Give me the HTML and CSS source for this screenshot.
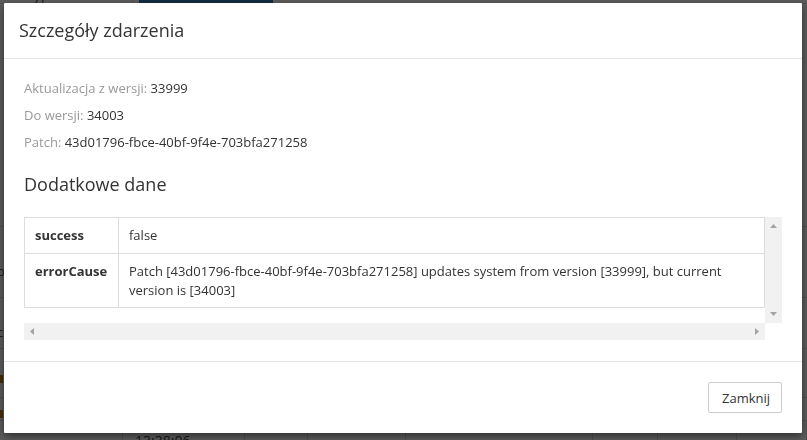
FILE: index.html
```html
<!DOCTYPE html>
<html lang="pl">
<head>
<meta charset="utf-8">
<title>Szczegóły zdarzenia</title>
<link rel="stylesheet" href="styles.css">
</head>
<body>
<div class="page">
  <div class="top-row">
    <span class="top-label">Typ zdarzenia</span>
    <span class="badge">UPDATE ERROR <span class="badge-dot"></span></span>
  </div>
  <div class="bg-table">
    <div class="bg-row r1"></div>
    <div class="bg-row r2"><span class="bg-mark">o</span></div>
    <div class="bg-row r3"><span class="bg-mark">c</span></div>
    <div class="bg-row r4"><span class="bg-orange"></span></div>
    <div class="bg-row r5"><span class="bg-orange"></span></div>
    <div class="bg-row r6">
      <div class="c c1"></div><div class="c c2">13:38:06</div><div class="c c3"></div><div class="c c4"></div><div class="c c5"></div><div class="c c6"></div><div class="c c7"></div><div class="c c8"></div>
    </div>
  </div>
</div>
<div class="backdrop"></div>
<div class="modal">
  <div class="modal-header">
    <h4 class="modal-title">Szczegóły zdarzenia</h4>
  </div>
  <div class="modal-body">
    <p class="info"><span class="label">Aktualizacja z wersji:</span> 33999</p>
    <p class="info"><span class="label">Do wersji:</span> 34003</p>
    <p class="info"><span class="label">Patch:</span> 43d01796-fbce-40bf-9f4e-703bfa271258</p>
    <h3 class="section-title">Dodatkowe dane</h3>
    <div class="scroll-box">
      <div class="scroll-content">
        <table class="data-table">
          <tr>
            <th>success</th>
            <td>false</td>
          </tr>
          <tr>
            <th>errorCause</th>
            <td>Patch [43d01796-fbce-40bf-9f4e-703bfa271258] updates system from version [33999], but current version is [34003]</td>
          </tr>
        </table>
      </div>
      <div class="vbar">
        <svg width="17" height="17" viewBox="0 0 17 17"><path d="M5 11 L8.5 7 L12 11 Z" fill="#a3a3a3"/></svg>
        <svg width="17" height="17" viewBox="0 0 17 17"><path d="M5 6 L8.5 10 L12 6 Z" fill="#a3a3a3"/></svg>
      </div>
      <div class="hbar">
        <svg width="17" height="17" viewBox="0 0 17 17"><path d="M10 5 L6 8.5 L10 12 Z" fill="#a3a3a3"/></svg>
        <svg width="17" height="17" viewBox="0 0 17 17"><path d="M7 5 L11 8.5 L7 12 Z" fill="#a3a3a3"/></svg>
      </div>
      <div class="corner"></div>
    </div>
  </div>
  <div class="modal-footer">
    <button class="btn" type="button">Zamknij</button>
  </div>
</div>
</body>
</html>
```
FILE: styles.css
```css
* { box-sizing: border-box; }
html, body { margin: 0; padding: 0; }
body {
  width: 807px;
  height: 440px;
  overflow: hidden;
  font-family: "Open Sans", "Liberation Sans", sans-serif;
  font-size: 13px;
  line-height: 1.42857;
  color: #333;
  background: #fff;
}

/* background page (under the backdrop) */
.page { width: 807px; height: 440px; overflow: hidden; }
.top-row {
  display: flex;
  align-items: flex-end;
  height: 19px;
  margin-top: -15px;
  border-bottom: 1px solid #ddd;
}
.top-label {
  width: 133px;
  padding-left: 25px;
  color: #555;
  border-right: 1px solid #ddd;
  height: 18px;
  line-height: 18px;
  font-size: 15px;
}
.badge {
  margin-left: 6px;
  width: 134px;
  height: 18px;
  background: #337ab7;
  color: #fff;
  font-size: 15px;
  font-weight: 600;
  line-height: 18px;
  padding-left: 12px;
  letter-spacing: 1px;
}
.badge-dot { display: inline-block; width: 10px; height: 10px; border-radius: 50%; background: #bcd; margin-left: 8px; }
.bg-table { display: flex; flex-direction: column; }
.bg-row { border-bottom: 1px solid #ddd; display: flex; align-items: flex-end; }
.r1 { height: 223px; }
.r2 { height: 71px; padding-bottom: 18px; }
.r3 { height: 51px; padding-bottom: 8px; }
.r4 { height: 49px; padding-bottom: 14px; }
.r5 { height: 23px; padding-bottom: 2px; }
.r6 { height: 40px; display: grid; grid-template-columns: 123px 122px 63px 98px 187px 65px 79px 1fr; align-items: start; border-bottom: 0; }
.bg-mark { color: #555; margin-left: -3px; line-height: 16px; }
.bg-orange { width: 5px; height: 8px; background: #c77a1a; margin-left: -2px; }
.c { height: 40px; border-right: 1px solid #ddd; }
.c2 { padding: 10px 0 0 12px; color: #444; font-size: 14px; }

.backdrop {
  position: fixed;
  inset: 0;
  background: rgba(0, 0, 0, 0.64);
}

/* modal */
.modal {
  position: fixed;
  left: 4px;
  top: 3px;
  width: 798px;
  background: #fff;
  border-radius: 1px;
  box-shadow: 0 3px 9px rgba(0, 0, 0, 0.5);
}
.modal-header {
  height: 56px;
  padding: 15px;
  border-bottom: 1px solid #e5e5e5;
}
.modal-title {
  margin: 0;
  font-size: 18px;
  font-weight: 400;
  line-height: 24px;
  color: #333;
}
.modal-body {
  padding: 20px 20px 21px;
}
.info {
  margin: 0 0 8.4px;
}
.label { color: #999; }
.section-title {
  margin: 23px 0 23px;
  font-size: 18px;
  font-weight: 400;
  line-height: 20px;
  color: #333;
}
.scroll-box {
  display: grid;
  grid-template-columns: 741px 17px;
  grid-template-rows: 106px 17px;
  width: 758px;
}
.scroll-content { overflow: hidden; }
.data-table {
  width: 741px;
  border-collapse: collapse;
  border: 1px solid #ddd;
}
.data-table th, .data-table td {
  padding: 8px;
  border: 1px solid #ddd;
  text-align: left;
  vertical-align: top;
}
.data-table th {
  width: 94px;
  font-weight: 700;
  padding-left: 10px;
}
.data-table td { padding-left: 10px; }
.vbar {
  background: #f1f1f1;
  display: flex;
  flex-direction: column;
  justify-content: space-between;
}
.hbar {
  background: #f1f1f1;
  display: flex;
  justify-content: space-between;
}
.vbar svg, .hbar svg { display: block; }
.corner { background: #fff; }
.modal-footer {
  border-top: 1px solid #e5e5e5;
  padding: 20px;
  display: flex;
  justify-content: flex-end;
}
.btn {
  font-family: "Open Sans", "Liberation Sans", sans-serif;
  font-size: 13px;
  line-height: 18.57px;
  color: #333;
  background: #fff;
  border: 1px solid #ccc;
  border-radius: 2px;
  padding: 5px 13px;
  height: 31px;
  width: 74px;
}
```
